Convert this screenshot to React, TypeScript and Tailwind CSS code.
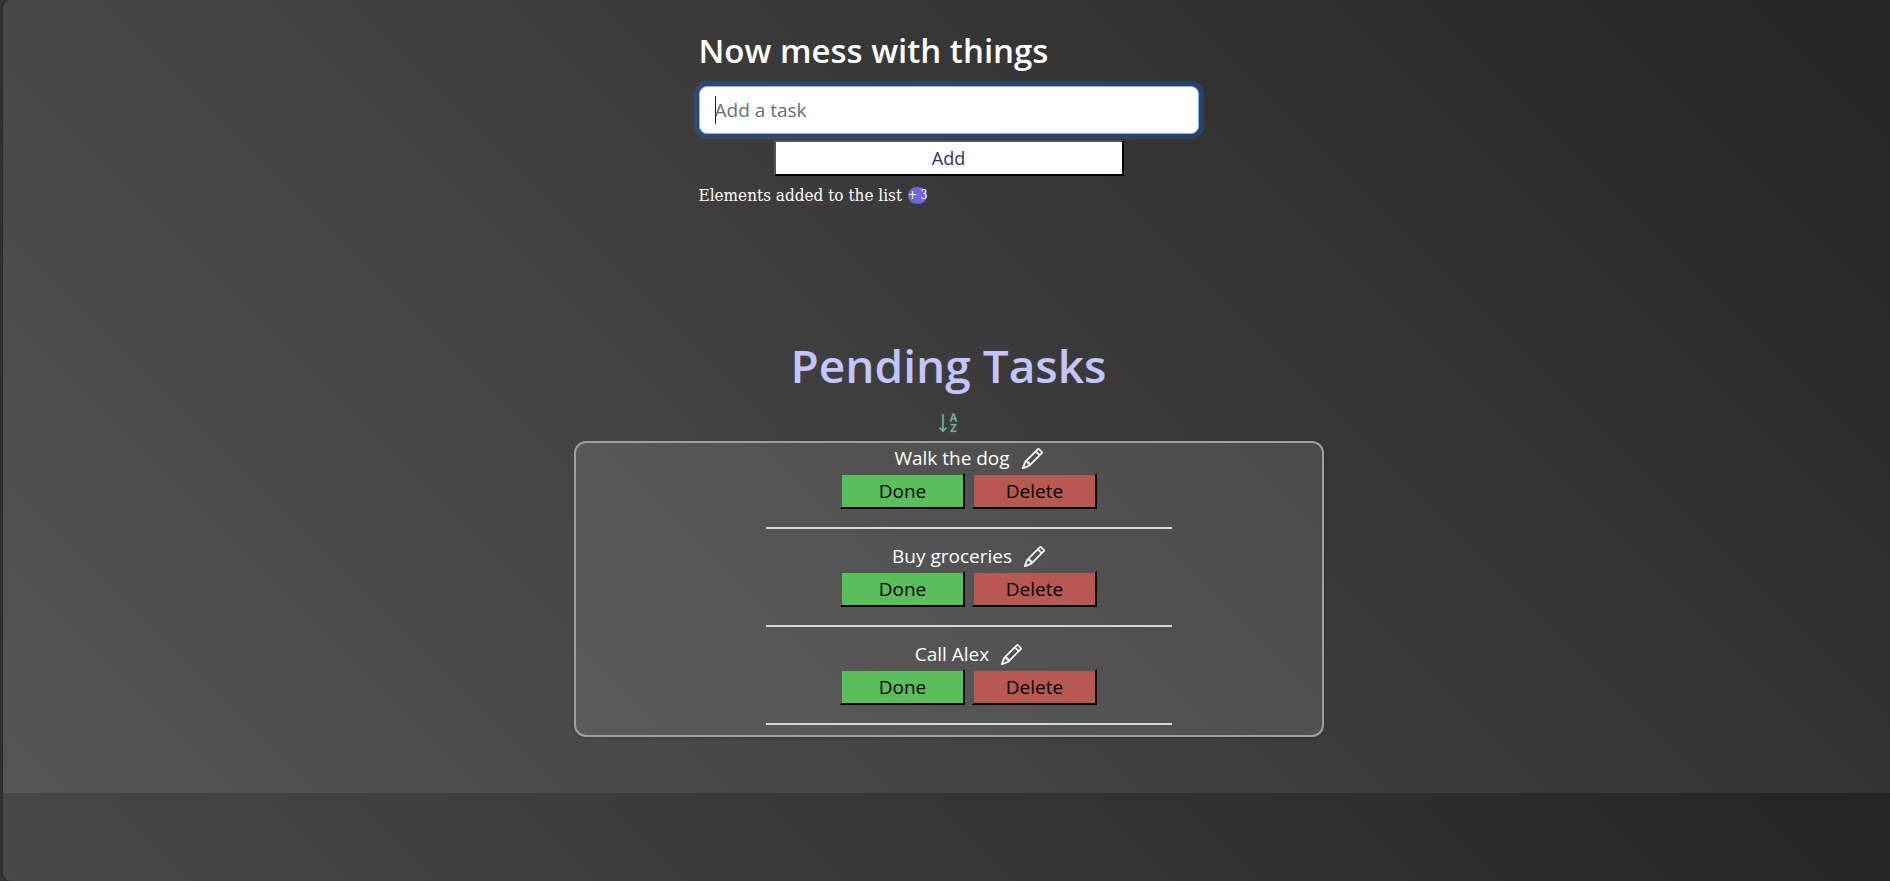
import { useState } from "react";
import { BsPencil, BsSortAlphaDown } from "react-icons/bs";

const initialTasks = ["Walk the dog", "Buy groceries", "Call Alex"];

function TaskButton({ label, tone, onClick }: { label: string; tone: string; onClick?: () => void }) {
  return (
    <button
      type="button"
      onClick={onClick}
      className={`h-9 w-[125px] border-2 border-t-transparent border-r-black border-b-black border-l-transparent text-[19px] leading-6 text-black ${tone}`}
    >
      {label}
    </button>
  );
}

function TaskItem({ name, onRemove }: { name: string; onRemove: () => void }) {
  return (
    <li className="mb-2.5 flex flex-col items-center">
      <div className="flex h-[30px] items-center gap-3 text-[19px] leading-7 font-medium text-white">
        <span>{name}</span>
        <button type="button" aria-label={`Edit ${name}`}>
          <BsPencil className="size-[21px] stroke-current stroke-[0.4px]" />
        </button>
      </div>
      <div className="flex gap-[7px]">
        <TaskButton label="Done" tone="bg-[#5abe5a] bg-clip-padding" onClick={onRemove} />
        <TaskButton label="Delete" tone="bg-[#b75851] bg-clip-padding" onClick={onRemove} />
      </div>
      <hr className="mt-[18px] w-[406px] max-w-full border-t-2 border-[#d8d8d8]" />
    </li>
  );
}

export default function App() {
  const [tasks, setTasks] = useState(initialTasks);
  const [draft, setDraft] = useState("");

  const addTask = () => {
    if (!draft.trim()) return;
    setTasks([...tasks, draft.trim()]);
    setDraft("");
  };

  return (
    <div className="min-h-screen bg-[#363636] pl-[3px] font-['Open_Sans','Noto_Sans',sans-serif]">
      <main className="flex min-h-screen flex-col items-center rounded-l-lg bg-[linear-gradient(45deg,#555555,#242424)] bg-[length:100%_793px] pt-[26px] pb-36 pl-1 shadow-[0_0_4px_rgba(0,0,0,0.5)]">
        <form
          className="flex w-[500px] max-w-full flex-col"
          onSubmit={(e) => {
            e.preventDefault();
            addTask();
          }}
        >
          <label htmlFor="task" className="mb-2.5 text-[33px] leading-[50px] font-semibold text-white">
            Now mess with things
          </label>
          <div className="relative flex">
            <input
              id="task"
              type="text"
              autoFocus
              value={draft}
              onChange={(e) => setDraft(e.target.value)}
              placeholder="Add a task"
              className="h-12 w-full rounded-lg border border-[#86b7fe] bg-white px-[15px] text-[19px] text-[#212529] shadow-[0_0_0_5px_rgba(13,110,253,0.25)] outline-none placeholder-shown:caret-transparent placeholder:text-[#6a6d70]"
            />
            {draft === "" && <span aria-hidden="true" className="absolute top-2.5 left-4 h-7 w-px bg-[#212529]" />}
          </div>
          <button
            type="submit"
            className="mt-1.5 h-9 w-[70%] self-center border-2 border-black bg-white text-[18px] leading-6 text-[#2e3278] [border-style:outset]"
          >
            Add
          </button>
          <p className="mt-[7px] flex items-center gap-[6px] font-['DejaVu_Serif_Condensed','DejaVu_Serif',serif] text-[17px] leading-6 text-white">
            Elements added to the list
            <span className="flex h-[17px] w-[19px] items-center justify-center rounded-full bg-[#6868e0] text-[12px] leading-none whitespace-nowrap">
              + {tasks.length}
            </span>
          </p>
        </form>

        <h1 className="mt-[122px] text-[46px] leading-[72px] font-semibold text-[#c4c4ff]">Pending Tasks</h1>
        <button type="button" aria-label="Sort tasks" className="mt-2.5 mb-1.5 text-[#74b5a3]">
          <BsSortAlphaDown className="size-6 stroke-current stroke-[0.2px]" />
        </button>
        <ul className="flex w-[750px] max-w-full flex-col gap-0.5 rounded-xl border-2 border-[#a0a0a0] bg-white/10 pl-10 shadow-[0_1px_3px_rgba(0,0,0,0.2)]">
          {tasks.map((task) => (
            <TaskItem key={task} name={task} onRemove={() => setTasks(tasks.filter((t) => t !== task))} />
          ))}
        </ul>
      </main>
    </div>
  );
}
